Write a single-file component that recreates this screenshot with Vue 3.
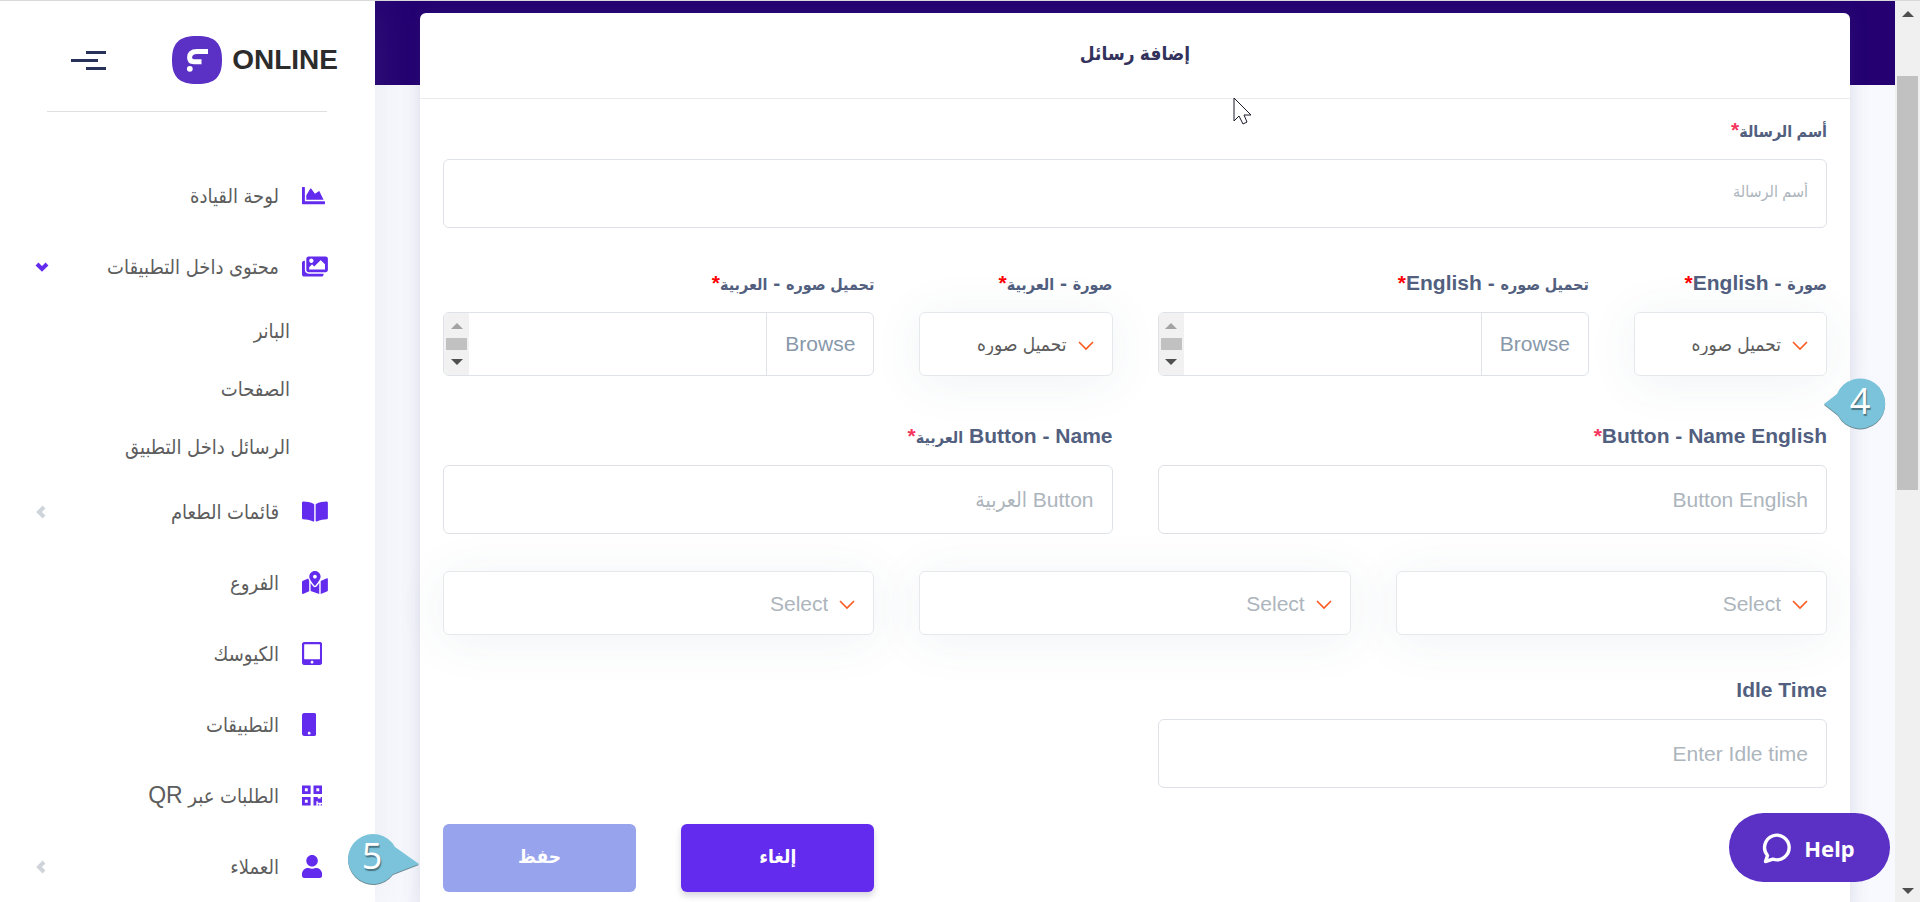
<template>
  <div class="page">
    <aside class="sidebar" dir="rtl">
      <div class="brand-row">
        <a class="brand" href="#" dir="ltr">
          <svg class="brand-mark" viewBox="0 0 50 48" aria-hidden="true">
            <path d="M25 0C43 0 50 7 50 24S43 48 25 48 0 41 0 24 7 0 25 0Z" fill="#5a30c5" />
            <path d="M36 15.4H25Q17.6 15.4 17.6 21.5Q17.6 25.8 22 25.8H29.5" fill="none" stroke="#fff" stroke-width="5" />
            <circle cx="17.8" cy="32.8" r="2.9" fill="#fff" />
          </svg>
          <span class="brand-name">ONLINE</span>
        </a>
        <button class="menu-toggle" type="button" aria-label="Toggle menu">
          <span class="bar"></span>
          <span class="bar bar-mid"></span>
          <span class="bar"></span>
        </button>
      </div>
      <hr class="divider">
      <nav>
        <ul class="nav-list">
          <li v-for="item in menu" :key="item.label">
            <a class="nav-link" href="#">
              <span class="nav-icon" dir="ltr">
                <svg :viewBox="`0 0 ${item.w} 512`" height="23"><path :d="item.icon" fill="currentColor" /></svg>
              </span>
              <span class="nav-text">{{ item.label }} <span v-if="item.latin" class="latin">{{ item.latin }}</span></span>
              <svg v-if="item.children" class="caret open" viewBox="0 0 14 10"><path d="M2 2l5 5 5-5" /></svg>
              <svg v-else-if="item.more" class="caret" viewBox="0 0 10 14"><path d="M8 2L3 7l5 5" /></svg>
            </a>
            <ul v-if="item.children" class="sub-list">
              <li v-for="child in item.children" :key="child"><a class="sub-link" href="#">{{ child }}</a></li>
            </ul>
          </li>
        </ul>
      </nav>
    </aside>

    <main class="main" dir="rtl">
      <form class="card" @submit.prevent>
        <header class="card-header"><h1>إضافة رسائل</h1></header>
        <div class="card-body">
          <div class="row">
            <div class="field span-12">
              <label for="name"><span class="ar">أسم الرسالة</span><span class="req">*</span></label>
              <input id="name" class="control small-hint" type="text" placeholder="أسم الرسالة">
            </div>
          </div>

          <div class="row labelled uploads">
            <template v-for="up in uploads" :key="up.id">
              <div class="field span-2">
                <label :for="up.id + '-type'"><span class="ar">صورة</span> - <span :class="{ ar: up.id === 'ar' }">{{ up.lang }}</span><span class="req strong">*</span></label>
                <div class="select-box">
                  <select :id="up.id + '-type'" class="control filled"><option>تحميل صوره</option></select>
                  <svg class="arrow" viewBox="0 0 16 10"><path d="M1 1l7 7 7-7" /></svg>
                </div>
              </div>
              <div class="field span-4">
                <label :for="up.id + '-file'"><span class="ar">تحميل صوره</span> - <span :class="{ ar: up.id === 'ar' }">{{ up.lang }}</span><span class="req strong">*</span></label>
                <div class="file-box">
                  <span class="browse">Browse</span>
                  <span class="file-name"></span>
                  <span class="mini-scroll">
                    <i class="tri up faded"></i>
                    <i class="mini-thumb"></i>
                    <i class="tri down"></i>
                  </span>
                  <input :id="up.id + '-file'" type="file">
                </div>
              </div>
            </template>
          </div>

          <div class="row labelled">
            <div class="field span-6">
              <label for="btn-en">Button - Name English<span class="req">*</span></label>
              <input id="btn-en" class="control" type="text" placeholder="Button English">
            </div>
            <div class="field span-6">
              <label for="btn-ar">Button - Name <span class="ar">العربية</span><span class="req">*</span></label>
              <input id="btn-ar" class="control" type="text" placeholder="Button العربية">
            </div>
          </div>

          <div class="row plain">
            <div v-for="n in 3" :key="n" class="select-box span-4">
              <select class="control" :aria-label="'Select ' + n"><option>Select</option></select>
              <svg class="arrow" viewBox="0 0 16 10"><path d="M1 1l7 7 7-7" /></svg>
            </div>
          </div>

          <div class="row labelled">
            <div class="field span-6">
              <label for="idle">Idle Time</label>
              <input id="idle" class="control" type="text" placeholder="Enter Idle time">
            </div>
          </div>

          <div class="row actions">
            <button class="btn btn-cancel" type="button">إلغاء</button>
            <button class="btn btn-save" type="submit">حفظ</button>
          </div>
        </div>
      </form>
    </main>

    <div class="scrollbar">
      <i class="tri up"></i>
      <div class="track"><div class="thumb"></div></div>
      <i class="tri down"></i>
    </div>

    <button class="help" type="button">
      <svg viewBox="0 0 30 32" width="30" height="32" aria-hidden="true">
        <path d="M5.5 23.5A12.3 12.3 0 1 1 11 27.2L3.5 29.5Z" fill="none" stroke="#fff" stroke-width="3.4" stroke-linejoin="round" />
      </svg>
      Help
    </button>

    <div class="pin pin-four">
      <svg viewBox="0 0 62 52"><path d="M0 27L13 17A25 25 0 1 1 14 38Z" /></svg>
      <span>4</span>
    </div>
    <div class="pin pin-five">
      <svg viewBox="0 0 72 52"><path d="M72 32L48 15A25 25 0 1 0 46 42Z" /></svg>
      <span>5</span>
    </div>

    <svg class="pointer" viewBox="0 0 19 28" aria-hidden="true">
      <path d="M1 1V24L6 19L10 27L14 25L11 18H18Z" fill="#fff" stroke="#1b1b2b" />
    </svg>
  </div>
</template>

<script setup>
const menu = [
  { label: 'لوحة القيادة', w: 512, icon: 'M500 384c6.6 0 12 5.4 12 12v40c0 6.6-5.4 12-12 12H12c-6.6 0-12-5.4-12-12V76c0-6.6 5.4-12 12-12h40c6.6 0 12 5.4 12 12v308h436zM372.7 159.5L288 216l-85.3-113.7c-5.1-6.8-15.5-6.3-19.9 1L96 248v104h384l-89.9-187.8c-3.2-6.5-11.4-8.7-17.4-4.7z' },
  {
    label: 'محتوى داخل التطبيقات',
    w: 576,
    icon: 'M480 416v16c0 26.51-21.49 48-48 48H48c-26.51 0-48-21.49-48-48V176c0-26.51 21.49-48 48-48h16v208c0 44.112 35.888 80 80 80h336zm96-80V80c0-26.51-21.49-48-48-48H144c-26.51 0-48 21.49-48 48v256c0 26.51 21.49 48 48 48h384c26.51 0 48-21.49 48-48zM256 128c0 26.51-21.49 48-48 48s-48-21.49-48-48 21.49-48 48-48 48 21.49 48 48zm-96 144l55.515-55.515c4.686-4.686 12.284-4.686 16.971 0L272 256l135.515-135.515c4.686-4.686 12.284-4.686 16.971 0L512 208v112H160v-48z',
    children: ['البانر', 'الصفحات', 'الرسائل داخل التطبيق']
  },
  { label: 'قائمات الطعام', w: 576, more: true, icon: 'M542.22 32.05c-54.8 3.11-163.72 14.43-230.96 55.59-4.64 2.84-7.27 7.89-7.27 13.17v363.87c0 11.55 12.63 18.85 23.28 13.49 69.18-34.82 169.23-44.32 218.7-46.92 16.89-.89 30.02-14.43 30.02-30.66V62.75c.01-17.71-15.35-31.74-33.77-30.7zM264.73 87.64C197.5 46.48 88.58 35.17 33.78 32.05 15.36 31.01 0 45.04 0 62.75V400.6c0 16.24 13.13 29.78 30.02 30.66 49.49 2.6 149.59 12.11 218.77 46.95 10.62 5.35 23.21-1.94 23.21-13.46V100.63c0-5.29-2.62-10.14-7.27-12.99z' },
  { label: 'الفروع', w: 576, icon: 'M288 0c-69.59 0-126 56.41-126 126 0 56.26 82.35 158.8 113.9 196.02 6.39 7.54 17.82 7.54 24.2 0C331.65 284.8 414 182.26 414 126 414 56.41 357.59 0 288 0zm0 168c-23.2 0-42-18.8-42-42s18.8-42 42-42 42 18.8 42 42-18.8 42-42 42zM20.12 215.95A32.006 32.006 0 0 0 0 245.66v250.32c0 11.32 11.43 19.06 21.94 14.86L160 448V214.92c-8.84-15.98-16.07-31.54-21.25-46.42L20.12 215.95zM288 359.67c-14.07 0-27.38-6.18-36.51-16.96-19.66-23.2-40.57-49.62-59.49-76.72v182l192 64V266c-18.92 27.09-39.82 53.52-59.49 76.72-9.13 10.77-22.44 16.95-36.51 16.95zm266.06-198.51L416 224v288l139.88-55.95A31.996 31.996 0 0 0 576 426.34V176.02c0-11.32-11.43-19.06-21.94-14.86z' },
  { label: 'الكيوسك', w: 448, icon: 'M400 0H48C21.5 0 0 21.5 0 48v416c0 26.5 21.5 48 48 48h352c26.5 0 48-21.5 48-48V48c0-26.5-21.5-48-48-48zM224 480c-17.7 0-32-14.3-32-32s14.3-32 32-32 32 14.3 32 32-14.3 32-32 32zm176-108c0 6.6-5.4 12-12 12H60c-6.6 0-12-5.4-12-12V60c0-6.6 5.4-12 12-12h328c6.6 0 12 5.4 12 12v312z' },
  { label: 'التطبيقات', w: 320, icon: 'M272 0H48C21.5 0 0 21.5 0 48v416c0 26.5 21.5 48 48 48h224c26.5 0 48-21.5 48-48V48c0-26.5-21.5-48-48-48zM160 480c-17.7 0-32-14.3-32-32s14.3-32 32-32 32 14.3 32 32-14.3 32-32 32z' },
  { label: 'الطلبات عبر', latin: 'QR', w: 448, icon: 'M0 224h192V32H0v192zM64 96h64v64H64V96zm192-64v192h192V32H256zm128 128h-64V96h64v64zM0 480h192V288H0v192zm64-128h64v64H64v-64zm352-64h32v128h-96v-32h-32v96h-64V288h96v32h64v-32zm0 160h32v32h-32v-32zm-64 0h32v32h-32v-32z' },
  { label: 'العملاء', w: 448, more: true, icon: 'M224 256c70.7 0 128-57.3 128-128S294.7 0 224 0 96 57.3 96 128s57.3 128 128 128zm89.6 32h-16.7c-22.2 10.2-46.9 16-72.9 16s-50.6-5.8-72.9-16h-16.7C60.2 288 0 348.2 0 422.4V464c0 26.5 21.5 48 48 48h352c26.5 0 48-21.5 48-48v-41.6c0-74.2-60.2-134.4-134.4-134.4z' }
];

const uploads = [
  { id: 'en', lang: 'English' },
  { id: 'ar', lang: 'العربية' }
];
</script>

<style>
body { margin: 0; background: #f8f9fe; }
</style>

<style scoped>
* { box-sizing: border-box; }
.page {
  --purple: #622bed;
  --orange: #fb5a1e;
  position: relative;
  display: grid;
  grid-template-columns: 375px 1fr 25px;
  grid-template-rows: minmax(0, 1fr);
  height: 100vh;
  overflow: hidden;
  border-top: 1px solid #d9d9dc;
  font-family: "Liberation Sans", "DejaVu Sans Condensed", "DejaVu Sans", sans-serif;
  font-size: 21px;
  color: #525f7f;
}
input, select, button { font: inherit; }

/* sidebar */
.sidebar {
  background: #fff;
  padding: 35px 47px 0 35px;
  box-shadow: 0 0 45px rgba(136, 152, 170, 0.15);
  z-index: 1;
}
.brand-row {
  display: flex;
  align-items: center;
  justify-content: space-between;
  margin: 0 -10px 0 36px;
}
.brand { display: flex; align-items: center; gap: 10px; text-decoration: none; }
.brand-mark { width: 50px; height: 48px; }
.brand-name { font-size: 28px; font-weight: 700; color: #2d2c2c; }
.menu-toggle {
  display: flex;
  flex-direction: column;
  gap: 5px;
  width: 35px;
  padding: 0;
  border: 0;
  background: none;
}
.bar { width: 20px; height: 3px; background: #273159; }
.bar-mid { width: 27px; align-self: flex-end; }
.divider { margin: 27px 1px 48px 12px; border: 0; border-top: 1px solid #dfdfe1; }
.nav-list, .sub-list { list-style: none; margin: 0; padding: 0; }
.nav-link {
  display: flex;
  align-items: center;
  gap: 23px;
  height: 71px;
  color: #5d5d5d;
  font-size: 20px;
  text-decoration: none;
}
.nav-icon { display: flex; width: 26px; color: var(--purple); }
.nav-text { flex: 1; white-space: nowrap; }
.latin { font-size: 23px; }
.caret {
  width: 10px;
  height: 14px;
  margin-left: 1px;
  fill: none;
  stroke: #ced4da;
  stroke-width: 4;
}
.caret.open { width: 14px; height: 10px; margin-left: 0; stroke: var(--purple); }
.sub-link {
  display: flex;
  align-items: center;
  height: 58px;
  padding-right: 38px;
  color: #5d5d5d;
  font-size: 20px;
  text-decoration: none;
}

/* form card */
.main {
  padding: 12px 45px 0;
  background: linear-gradient(#240071 84px, #f8f9fe 84px);
}
.card {
  min-height: 100vh;
  background: #fff;
  border-radius: 6px;
  box-shadow: 0 0 20px rgba(70, 80, 130, 0.18);
}
.card-header {
  display: flex;
  align-items: center;
  justify-content: center;
  height: 86px;
  padding-bottom: 4px;
  border-bottom: 1px solid #ececee;
}
.card-header h1 { margin: 0; font-size: 19px; color: #32325d; }
.card-body { padding: 17px 23px 0; }
.row { display: grid; grid-template-columns: repeat(12, 1fr); column-gap: 45px; }
.row.labelled { margin-top: 41px; }
.row.uploads { margin-bottom: 46px; }
.row.plain { margin-top: 37px; }
.row.actions { margin-top: 36px; }
.span-2 { grid-column: span 2; }
.span-4 { grid-column: span 4; }
.span-6 { grid-column: span 6; }
.span-12 { grid-column: span 12; }
.field label {
  display: block;
  height: 28px;
  margin-bottom: 15px;
  line-height: 28px;
  font-weight: 700;
  white-space: nowrap;
}
.ar { font-size: 16px; }
.req { color: #f5365c; }
.req.strong { color: #f00; }
.control {
  display: block;
  width: 100%;
  height: 69px;
  padding: 0 18px;
  border: 1px solid #dee2e6;
  border-radius: 6px;
  background: #fff;
  color: #adb5bd;
}
.control::placeholder { color: #adb5bd; opacity: 1; }
.small-hint { padding-bottom: 4px; font-size: 16px; }
.select-box { position: relative; }
.select-box .control {
  appearance: none;
  height: 64px;
  padding-right: 45px;
  border-color: #e6e9ec;
  box-shadow: 0 5px 50px rgba(47, 91, 111, 0.08);
}
.select-box .filled { color: #5c5c5c; font-size: 19px; }
.arrow {
  position: absolute;
  top: 29px;
  right: 19px;
  width: 16px;
  height: 10px;
  fill: none;
  stroke: var(--orange);
  stroke-width: 1.6;
  pointer-events: none;
}
.file-box {
  position: relative;
  display: flex;
  height: 64px;
  border: 1px solid #dee2e6;
  border-radius: 6px;
  overflow: hidden;
}
.file-box input { position: absolute; inset: 0; width: 100%; height: 100%; opacity: 0; }
.browse {
  display: flex;
  align-items: center;
  padding: 0 18px;
  border-left: 1px solid #dee2e6;
  color: #8898aa;
}
.file-name { flex: 1; }
.mini-scroll {
  display: flex;
  flex-direction: column;
  align-items: center;
  justify-content: space-between;
  width: 25px;
  padding: 10px 0;
  background: #f1f1f1;
}
.mini-thumb { width: 21px; height: 12px; background: #c1c1c1; }
.tri { width: 0; height: 0; border: 0 solid transparent; border-width: 0 6px; }
.tri.up { border-bottom: 6px solid #505050; }
.tri.down { border-top: 6px solid #505050; }
.tri.faded { border-bottom-color: #a3a3a3; }
.btn {
  grid-column: span 2;
  height: 68px;
  padding-bottom: 5px;
  border: 0;
  border-radius: 6px;
  color: #fff;
  font-size: 19px;
  font-weight: 700;
}
.btn-cancel {
  grid-column: 9 / span 2;
  background: var(--purple);
  box-shadow: 0 4px 6px rgba(50, 50, 93, 0.2);
}
.btn-save { background: #97a3ec; }

/* page scrollbar */
.scrollbar {
  display: flex;
  flex-direction: column;
  align-items: center;
  padding: 10px 0 8px;
  background: #f0f0f0;
}
.track { flex: 1; width: 21px; padding: 59px 0 0; }
.thumb { height: 51%; background: #c1c1c1; }

/* floating pieces */
.help {
  position: absolute;
  right: 30px;
  bottom: 20px;
  z-index: 2;
  display: flex;
  align-items: center;
  justify-content: center;
  gap: 12px;
  width: 161px;
  height: 69px;
  padding-right: 8px;
  border: 0;
  border-radius: 35px;
  background: #5a30c5;
  color: #fff;
  font-family: "Noto Sans", sans-serif;
  font-size: 22px;
  font-weight: 700;
}
.pin {
  position: absolute;
  z-index: 2;
  height: 52px;
  color: #fff;
  font-family: "Open Sans", sans-serif;
  font-size: 36px;
  line-height: 47px;
  text-align: center;
  text-shadow: 1px 2px 1px rgba(0, 0, 0, 0.4);
}
.pin svg { position: absolute; inset: 0; fill: #7ac3db; filter: drop-shadow(0 1px 0 #6d8a93); }
.pin span { position: relative; }
.pin-four { top: 376px; right: 34px; width: 62px; padding-left: 10px; }
.pin-five { top: 831px; left: 347px; width: 72px; padding-right: 22px; }
.pointer { position: absolute; top: 96px; left: 1233px; width: 19px; height: 28px; }
</style>
